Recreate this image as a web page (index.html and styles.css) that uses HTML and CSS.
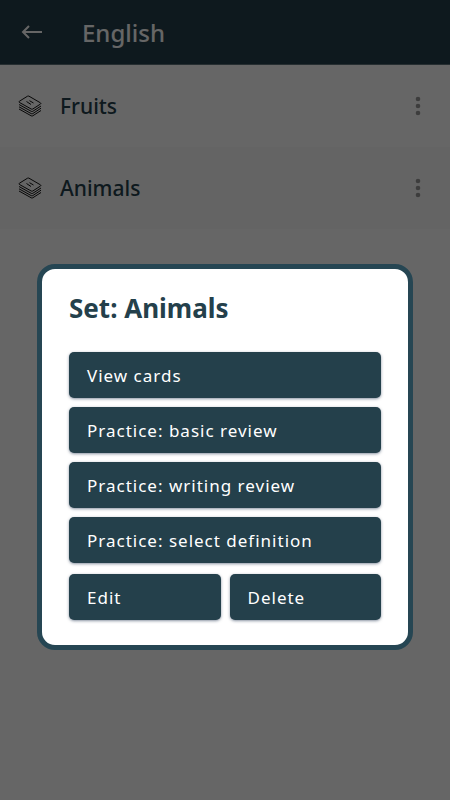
FILE: index.html
```html
<!DOCTYPE html>
<html lang="en">
<head>
  <meta charset="utf-8">
  <meta name="viewport" content="width=device-width, initial-scale=1">
  <title>English</title>
  <link rel="stylesheet" href="styles.css">
</head>
<body>
  <svg class="sprite" aria-hidden="true">
    <symbol id="cards" viewBox="0 0 24 22">
      <path d="M1.300 6.300 9.500 1.200Q10.200.8 11 1.200L22.400 7.800Q23.300 8.400 22.500 9L14.800 14Q14 14.500 13.200 14L1.300 7.400Q.7 6.900 1.300 6.300Z"/>
      <path d="M1 9.500 13.200 16.300Q14 16.800 14.800 16.300L23 11"/>
      <path d="M1 11.800 13.200 18.600Q14 19.100 14.800 18.600L23 13.200"/>
      <path d="M1 14 13.200 20.800Q14 21.300 14.800 20.800L23 15.500"/>
      <path d="M8.500 6.500 13 9.500M11.500 5.700 15.500 8"/>
    </symbol>
    <symbol id="more" viewBox="0 0 6 20">
      <circle cx="3" cy="3" r="2.300"/><circle cx="3" cy="10" r="2.300"/><circle cx="3" cy="17" r="2.300"/>
    </symbol>
  </svg>

  <header class="app-bar">
    <button class="icon-button" type="button" aria-label="Back">
      <svg class="back-icon" viewBox="0 0 22 16"><path d="M21 8H2M8 2 2 8l6 6"/></svg>
    </button>
    <h1 class="app-title">English</h1>
  </header>
  <main>
    <ul class="sets">
      <li class="set">
        <svg class="cards-icon" aria-hidden="true"><use href="#cards"/></svg>
        <span class="set-name">Fruits</span>
        <button class="icon-button" type="button" aria-label="Fruits options"><svg class="more-icon"><use href="#more"/></svg></button>
      </li>
      <li class="set">
        <svg class="cards-icon" aria-hidden="true"><use href="#cards"/></svg>
        <span class="set-name">Animals</span>
        <button class="icon-button" type="button" aria-label="Animals options"><svg class="more-icon"><use href="#more"/></svg></button>
      </li>
    </ul>
  </main>

  <div class="overlay">
    <section class="dialog" role="dialog" aria-modal="true" aria-labelledby="dialog-title">
      <h2 class="dialog-title" id="dialog-title">Set: Animals</h2>
      <div class="actions">
        <button class="action" type="button">View cards</button>
        <button class="action" type="button">Practice: basic review</button>
        <button class="action" type="button">Practice: writing review</button>
        <button class="action" type="button">Practice: select definition</button>
      </div>
      <div class="action-pair">
        <button class="action" type="button">Edit</button>
        <button class="action" type="button">Delete</button>
      </div>
    </section>
  </div>
</body>
</html>
```

FILE: styles.css
```css
* {
  box-sizing: border-box;
}

body {
  margin: 0;
  background: #fff;
  color: #24404b;
  font-family: "Noto Sans", sans-serif;
}

.sprite {
  position: absolute;
  width: 0;
  height: 0;
}

.app-bar {
  display: flex;
  align-items: center;
  gap: 30px;
  height: 65px;
  padding: 0 12px;
  background: #24404b;
  border-bottom: 1px solid #60747c;
  color: #fff;
}

.app-title {
  margin: 0;
  padding-top: 2px;
  font-size: 24px;
  font-weight: 500;
  line-height: 32px;
}

.icon-button {
  display: grid;
  place-items: center;
  width: 40px;
  height: 40px;
  padding: 0;
  border: 0;
  background: none;
  color: inherit;
}

.back-icon {
  width: 22px;
  height: 16px;
  fill: none;
  stroke: currentColor;
  stroke-width: 2;
}

.sets {
  margin: 0;
  padding: 0;
  list-style: none;
}

.set {
  display: flex;
  align-items: center;
  height: 82px;
  padding: 0 12px 0 18px;
}

.set:nth-child(even) {
  background: #fafafa;
}

.cards-icon {
  width: 24px;
  height: 22px;
  margin-right: 18px;
  fill: none;
  stroke: #111;
  stroke-width: 1;
}

.set-name {
  flex: 1;
  font-size: 21px;
  font-weight: 500;
  line-height: 28px;
}

.more-icon {
  width: 6px;
  height: 20px;
  fill: #999;
}

.overlay {
  position: fixed;
  inset: 0;
  display: flex;
  align-items: center;
  justify-content: center;
  padding: 114px 37px 0;
  background: rgba(0, 0, 0, 0.6);
}

.dialog {
  width: 100%;
  max-width: 480px;
  padding: 21px 27px 25px;
  background: #fff;
  border: 5px solid #264653;
  border-radius: 18px;
}

.dialog-title {
  margin: 0 0 26px;
  font-size: 26px;
  font-weight: 700;
  line-height: 36px;
}

.actions {
  display: grid;
  gap: 9px;
}

.action-pair {
  display: grid;
  grid-template-columns: 1fr 1fr;
  gap: 9px;
  margin-top: 11px;
}

.action {
  height: 46px;
  padding: 2px 18px 0;
  border: 0;
  border-radius: 5px;
  background: #24404b;
  box-shadow: 0 1px 3px rgba(20, 40, 70, 0.5);
  color: #fff;
  font: 400 17px/24px "Noto Sans", sans-serif;
  letter-spacing: 1px;
  text-align: left;
}
```
